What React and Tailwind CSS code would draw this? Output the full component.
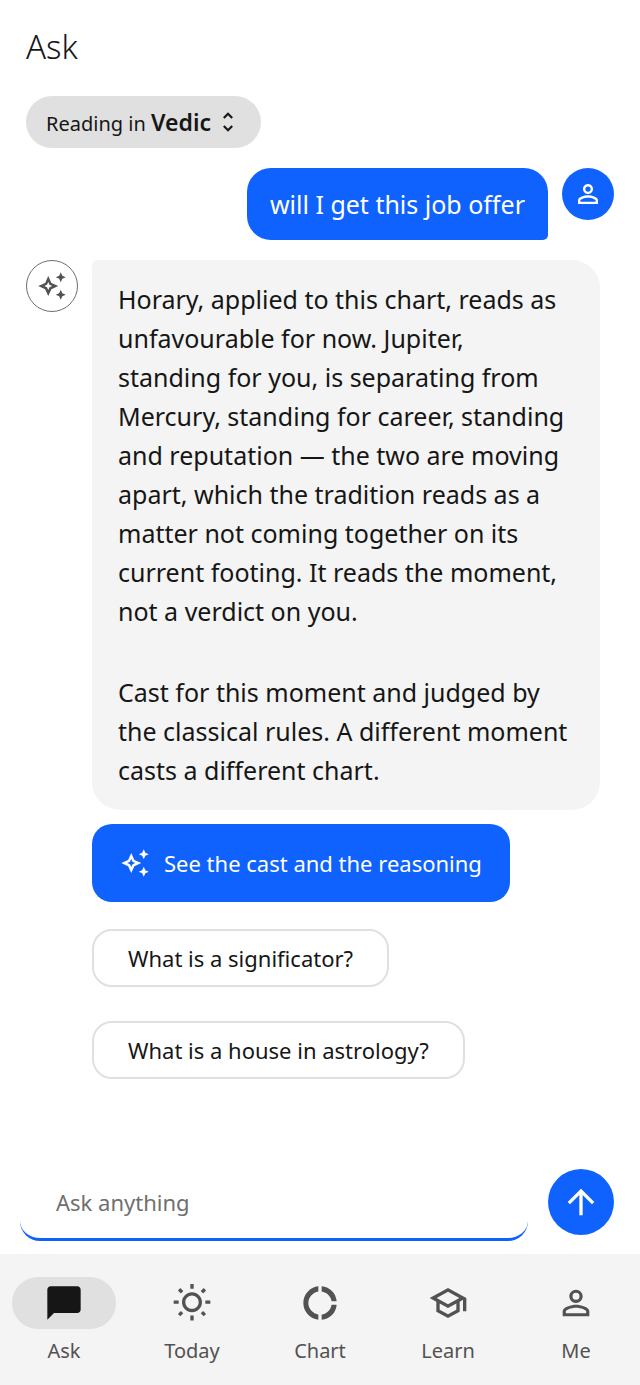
import { useState } from "react";
import {
  MdArrowUpward,
  MdChatBubble,
  MdDonutLarge,
  MdOutlineAutoAwesome,
  MdOutlineSchool,
  MdOutlineWbSunny,
  MdPersonOutline,
  MdUnfoldMore,
} from "react-icons/md";

const TABS = [
  { id: "ask", label: "Ask", Icon: MdChatBubble },
  { id: "today", label: "Today", Icon: MdOutlineWbSunny },
  { id: "chart", label: "Chart", Icon: MdDonutLarge },
  { id: "learn", label: "Learn", Icon: MdOutlineSchool },
  { id: "me", label: "Me", Icon: MdPersonOutline },
];

const FOLLOW_UPS = ["What is a significator?", "What is a house in astrology?"];

function UserMessage({ children }) {
  return (
    <div className="flex items-start justify-end gap-[14px] pr-[26px] pl-[92px]">
      <p className="rounded-3xl rounded-br-[5px] bg-[#0f62fe] px-[23px] py-4 text-[25px] leading-10 text-white">{children}</p>
      <div className="flex size-[52px] shrink-0 items-center justify-center rounded-full bg-[#0f62fe] text-white">
        <MdPersonOutline className="size-[30px]" aria-hidden />
      </div>
    </div>
  );
}

function GuideMessage({ paragraphs }) {
  return (
    <div className="flex items-start gap-[14px] pr-10 pl-[26px]">
      <div className="flex size-[52px] shrink-0 items-center justify-center rounded-full border border-[#6f6f6f] text-[#525252]">
        <MdOutlineAutoAwesome className="size-[30px]" aria-hidden />
      </div>
      <div className="flex flex-1 flex-col gap-[42px] rounded-[28px] rounded-tl-[6px] bg-[#f4f4f4] py-5 pr-[30px] pl-[26px] text-[25px] leading-[39px]">
        {paragraphs.map((text) => (
          <p key={text}>{text}</p>
        ))}
      </div>
    </div>
  );
}

function TabBar({ active, onChange }) {
  return (
    <nav className="grid grid-cols-5 bg-[#f4f4f4] pt-[23px] pb-5">
      {TABS.map(({ id, label, Icon }) => {
        const selected = id === active;
        return (
          <button
            key={id}
            type="button"
            aria-current={selected ? "page" : undefined}
            onClick={() => onChange(id)}
            className="flex flex-col items-center gap-2 text-[#525252]"
          >
            <span className={selected ? "flex h-[52px] w-[104px] items-center justify-center rounded-full bg-[#e0e0e0] text-[#161616]" : "flex h-[52px] w-[104px] items-center justify-center"}>
              <Icon className="size-10" aria-hidden />
            </span>
            <span className="text-[20px] leading-7">{label}</span>
          </button>
        );
      })}
    </nav>
  );
}

export default function App() {
  const [tab, setTab] = useState("ask");
  const [draft, setDraft] = useState("");

  return (
    <div className="flex min-h-screen flex-col bg-white font-['Noto_Sans',sans-serif] text-[#161616]">
      <header className="flex flex-col items-start gap-[29px] px-[26px] pt-[27px]">
        <h1 className="text-[33px] leading-10 font-light">Ask</h1>
        <button type="button" className="flex h-[52px] items-center rounded-full bg-[#e0e0e0] px-5 text-[20px]">
          <span>
            Reading in <strong className="text-[23px] font-semibold">Vedic</strong>
          </span>
          <MdUnfoldMore className="ml-1 size-[26px]" aria-hidden />
        </button>
      </header>

      <main className="flex flex-1 flex-col pt-5">
        <UserMessage>will I get this job offer</UserMessage>
        <div className="mt-5">
          <GuideMessage
            paragraphs={[
              "Horary, applied to this chart, reads as unfavourable for now. Jupiter, standing for you, is separating from Mercury, standing for career, standing and reputation — the two are moving apart, which the tradition reads as a matter not coming together on its current footing. It reads the moment, not a verdict on you.",
              "Cast for this moment and judged by the classical rules. A different moment casts a different chart.",
            ]}
          />
        </div>

        <div className="mt-[14px] flex flex-col items-start pr-10 pl-[92px]">
          <button type="button" className="flex h-[78px] items-center gap-[14px] rounded-[20px] bg-[#0f62fe] px-7 text-[22px] text-white">
            <MdOutlineAutoAwesome className="size-[30px]" aria-hidden />
            See the cast and the reasoning
          </button>
          <div className="mt-[27px] flex flex-col items-start gap-[34px]">
            {FOLLOW_UPS.map((question) => (
              <button key={question} type="button" onClick={() => setDraft(question)} className="h-[58px] rounded-[20px] border-2 border-[#e0e0e0] px-[34px] text-[22px]">
                {question}
              </button>
            ))}
          </div>
        </div>
      </main>

      <form onSubmit={(event) => event.preventDefault()} className="flex items-center gap-5 pr-[26px] pb-[13px] pl-5">
        <input
          type="text"
          aria-label="Ask anything"
          placeholder="Ask anything"
          value={draft}
          onChange={(event) => setDraft(event.target.value)}
          className="h-[79px] min-w-0 flex-1 rounded-[20px] border-b-3 border-[#0f62fe] px-9 pt-1 text-[22px] outline-none placeholder:text-[#6f6f6f]"
        />
        <button type="submit" aria-label="Send" className="flex size-[66px] shrink-0 items-center justify-center rounded-full bg-[#0f62fe] text-white">
          <MdArrowUpward className="size-10" aria-hidden />
        </button>
      </form>

      <TabBar active={tab} onChange={setTab} />
    </div>
  );
}
